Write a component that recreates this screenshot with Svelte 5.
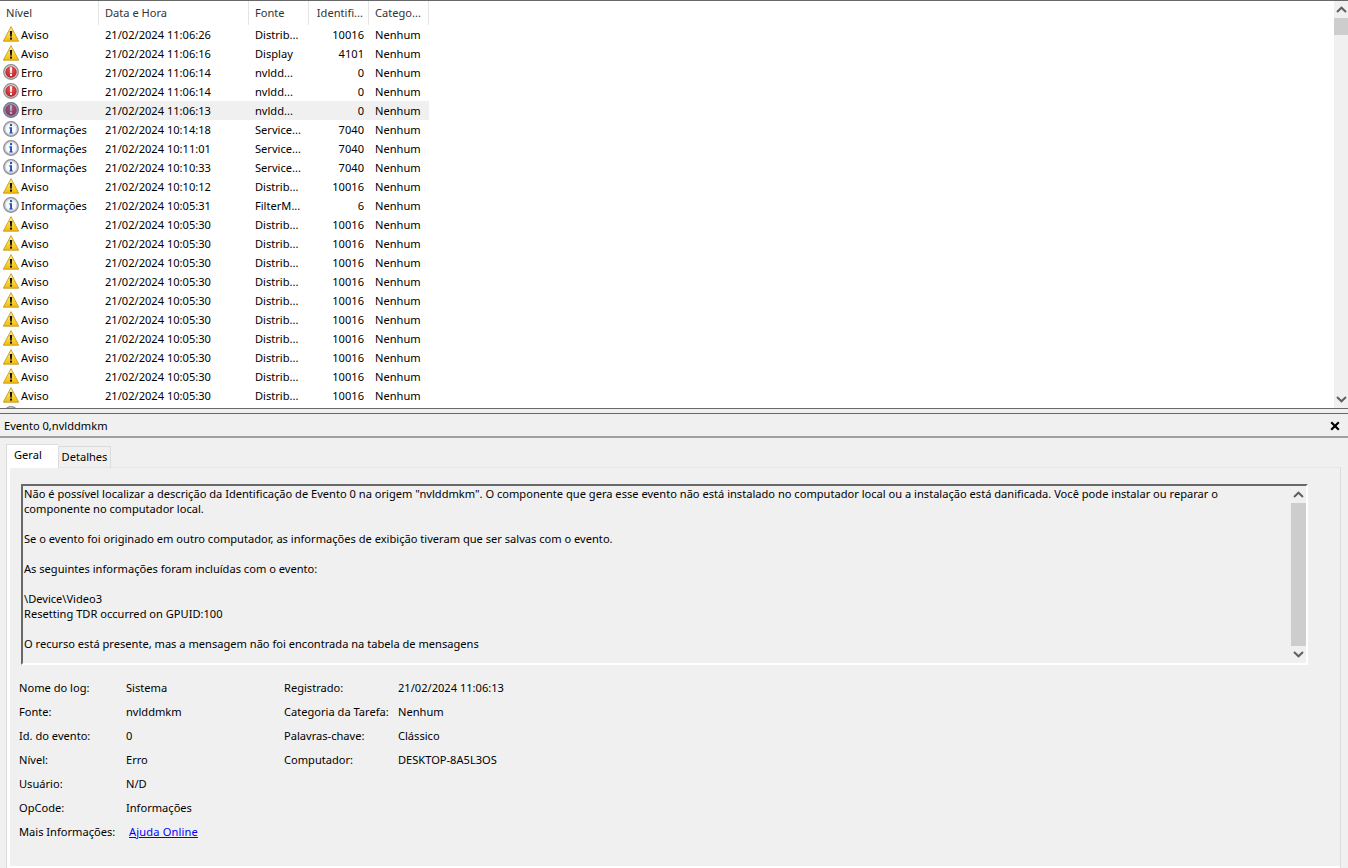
<script>
  const times = ['11:06:26','11:06:16','11:06:14','11:06:14','11:06:13','10:14:18','10:11:01','10:10:33','10:10:12','10:05:31'];
  const labels = { warn: 'Aviso', err: 'Erro', info: 'Informações' };
  const head = [
    { kind: 'warn', src: 'Distrib...', id: 10016 },
    { kind: 'warn', src: 'Display', id: 4101 },
    { kind: 'err', src: 'nvldd...', id: 0 },
    { kind: 'err', src: 'nvldd...', id: 0 },
    { kind: 'err', src: 'nvldd...', id: 0, selected: true },
    { kind: 'info', src: 'Service...', id: 7040 },
    { kind: 'info', src: 'Service...', id: 7040 },
    { kind: 'info', src: 'Service...', id: 7040 },
    { kind: 'warn', src: 'Distrib...', id: 10016 },
    { kind: 'info', src: 'FilterM...', id: 6 }
  ].map((r, i) => ({ ...r, time: times[i] }));
  const tail = Array.from({ length: 10 }, () => ({ kind: 'warn', src: 'Distrib...', id: 10016, time: '10:05:30' }));

  const fieldsLeft = [
    ['Nome do log:', 'Sistema'],
    ['Fonte:', 'nvlddmkm'],
    ['Id. do evento:', '0'],
    ['Nível:', 'Erro'],
    ['Usuário:', 'N/D'],
    ['OpCode:', 'Informações']
  ];
  const fieldsRight = [
    ['Registrado:', '21/02/2024 11:06:13'],
    ['Categoria da Tarefa:', 'Nenhum'],
    ['Palavras-chave:', 'Clássico'],
    ['Computador:', 'DESKTOP-8A5L3OS']
  ];
  const rows = [...head, ...tail];
</script>

{#snippet icon(kind, dim)}
  <svg class="ico" width="16" height="16" viewBox="0 0 16 16">
    {#if kind === 'warn'}
      <path d="M8 .6 L15.7 15.2 H.3 Z" fill="url(#gw)" stroke="#c2920f" stroke-width=".8" stroke-linejoin="round" />
      <path d="M6.8 5 H9.2 L8.7 10.8 H7.3 Z" fill="#111" />
      <rect x="7" y="11.6" width="2" height="2" fill="#111" />
    {:else if kind === 'err'}
      <circle cx="8" cy="8" r="7.3" fill="url(#gr)" stroke="#8b8b8b" stroke-width="1.2" />
      <circle cx="8" cy="8" r="5.7" fill="url(#ge)" />
      <path d="M6.8 3.2 H9.2 L8.7 9.2 H7.3 Z" fill="#fff" />
      <rect x="7" y="10" width="2" height="2" fill="#fff" />
      {#if dim}
        <circle cx="8" cy="8" r="7.9" fill="#3d5a9c" fill-opacity=".42" />
      {/if}
    {:else}
      <circle cx="8" cy="8" r="7.3" fill="url(#gr)" stroke="#8b8b8b" stroke-width="1.2" />
      <circle cx="8" cy="8" r="5.7" fill="#f7f9fd" stroke="#b9c4dc" stroke-width=".5" />
      <rect x="7" y="3.1" width="2.1" height="2" fill="#2450b0" />
      <path d="M6.3 6.2 H9 V11.4 H9.9 V12.6 H6.2 V11.4 H7.1 V7.4 H6.3 Z" fill="#2450b0" />
    {/if}
  </svg>
{/snippet}

{#snippet chevron(up)}
  <svg width="11" height="7" viewBox="0 0 11 7" class="chev">
    <path d={up ? 'M1 6 L5.5 1.7 L10 6' : 'M1 1 L5.5 5.3 L10 1'} fill="none" stroke="#606060" stroke-width="2" />
  </svg>
{/snippet}

<svg width="0" height="0" class="defs">
  <defs>
    <linearGradient id="gw" x1="0" y1="0" x2="0" y2="1">
      <stop offset="0" stop-color="#fff3a8" />
      <stop offset=".55" stop-color="#fbd63a" />
      <stop offset="1" stop-color="#f2b90f" />
    </linearGradient>
    <linearGradient id="gr" x1="0" y1="0" x2="0" y2="1">
      <stop offset="0" stop-color="#e4e4e4" />
      <stop offset="1" stop-color="#bcbcbc" />
    </linearGradient>
    <radialGradient id="ge" cx=".5" cy=".35" r=".75">
      <stop offset="0" stop-color="#ee5a5a" />
      <stop offset="1" stop-color="#b4141a" />
    </radialGradient>
  </defs>
</svg>

<div class="viewer">
  <section class="top">
    <div class="table">
      <div class="thead">
        <div class="th level">Nível</div>
        <div class="th date">Data e Hora</div>
        <div class="th source">Fonte</div>
        <div class="th ident">Identifi...</div>
        <div class="th cat">Catego...</div>
      </div>
      {#each rows as r}
        <div class="row">
          <div class="cell level">
            {@render icon(r.kind, r.selected)}
            <span class="lvl" class:sel={r.selected}>{labels[r.kind]}</span>
          </div>
          <div class="rest" class:sel={r.selected}>
            <div class="cell date">21/02/2024 {r.time}</div>
            <div class="cell source">{r.src}</div>
            <div class="cell ident">{r.id}</div>
            <div class="cell cat">Nenhum</div>
          </div>
        </div>
      {/each}
      <!-- next row, only the top of its icon shows above the pane edge -->
      <div class="peek">{@render icon('info', false)}</div>
    </div>
    <div class="vscroll">
      <div class="btn">{@render chevron(true)}</div>
      <div class="thumb small"></div>
      <div class="track"></div>
      <div class="btn">{@render chevron(false)}</div>
    </div>
  </section>

  <div class="splitter"></div>

  <section class="bottom">
    <header class="title">
      <span>Evento 0,nvlddmkm</span>
      <svg width="10" height="10" viewBox="0 0 10 10" class="close">
        <path d="M1.2 1.2 L8.8 8.8 M8.8 1.2 L1.2 8.8" stroke="#000" stroke-width="2.2" />
      </svg>
    </header>

    <div class="tabs">
      <div class="tab active">Geral</div>
      <div class="tab">Detalhes</div>
    </div>

    <div class="panel">
      <div class="pane">
        <div class="descbox">
          <div class="desc">
            <p>Não é possível localizar a descrição da Identificação de Evento 0 na origem "nvlddmkm". O componente que gera esse evento não está instalado no computador local ou a instalação está danificada. Você pode instalar ou reparar o componente no computador local.</p>
            <p>Se o evento foi originado em outro computador, as informações de exibição tiveram que ser salvas com o evento.</p>
            <p>As seguintes informações foram incluídas com o evento:</p>
            <p>\Device\Video3<br />Resetting TDR occurred on GPUID:100</p>
            <p>O recurso está presente, mas a mensagem não foi encontrada na tabela de mensagens</p>
          </div>
          <div class="vscroll inner">
            <div class="btn">{@render chevron(true)}</div>
            <div class="thumb"></div>
            <div class="btn">{@render chevron(false)}</div>
          </div>
        </div>

        <div class="fields">
          <div class="col">
            {#each fieldsLeft as [k, v]}
              <div class="field"><span class="key">{k}</span><span>{v}</span></div>
            {/each}
            <div class="field"><span class="key">Mais Informações:</span><span class="link">Ajuda Online</span></div>
          </div>
          <div class="col right">
            {#each fieldsRight as [k, v]}
              <div class="field"><span class="key">{k}</span><span>{v}</span></div>
            {/each}
          </div>
        </div>
      </div>
    </div>
  </section>
</div>

<style>
  :global(body) {
    margin: 0;
    background: #f0f0f0;
    font-family: "Noto Sans", "Open Sans", sans-serif;
    font-size: 11.1px;
    color: #000;
  }
  .defs { position: absolute; }
  .viewer { width: 1348px; height: 868px; overflow: hidden; display: flex; flex-direction: column; }

  .top {
    height: 407px;
    flex: none;
    border-top: 1px solid #696969;
    border-bottom: 1px solid #696969;
    background: #fff;
    display: flex;
    justify-content: space-between;
  }
  .table { width: 429px; height: 407px; overflow: hidden; }
  .thead { display: flex; height: 24px; }
  .th {
    box-sizing: border-box;
    line-height: 23px;
    padding-left: 6px;
    border-right: 1px solid #e5e5e5;
    color: #333;
    white-space: nowrap;
  }
  .level { width: 99px; }
  .date { width: 150px; }
  .source { width: 60px; }
  .ident { width: 60px; }
  .cat { width: 60px; }
  .th.ident { text-align: right; padding: 0 5px 0 0; }

  .row { display: flex; height: 19px; line-height: 19px; white-space: nowrap; }
  .cell { box-sizing: border-box; padding-left: 6px; overflow: hidden; }
  .cell.level { display: flex; align-items: flex-start; padding: 1px 0 0 3px; }
  .cell.ident { text-align: right; padding: 0 5px 0 0; }
  .rest { display: flex; }
  .ico { flex: none; }
  .lvl { margin: -1px 0 0 2px; padding-right: 100px; height: 19px; }
  .sel { background: #f0f0f0; }
  .peek { padding: 1px 0 0 3px; }

  .vscroll { width: 14px; background: #f0f0f0; display: flex; flex-direction: column; flex: none; }
  .btn { height: 17px; display: flex; align-items: center; justify-content: center; flex: none; }
  .thumb { flex: 1; background: #cdcdcd; }
  .thumb.small { flex: none; height: 17px; }
  .track { flex: 1; }
  .chev { display: block; }

  .splitter { height: 4px; background: #f0f0f0; border-bottom: 1px solid #696969; flex: none; }

  .bottom { flex: 1; display: flex; flex-direction: column; min-height: 0; }
  .title {
    box-sizing: border-box;
    height: 24px;
    flex: none;
    padding: 1px 8px 0 4px;
    display: flex;
    align-items: center;
    justify-content: space-between;
    border-bottom: 2px solid #a0a0a0;
  }
  .tabs { display: flex; padding: 6px 0 0 6px; height: 24px; align-items: flex-end; flex: none; position: relative; z-index: 1; margin-bottom: -1px; }
  .tab {
    box-sizing: border-box;
    height: 22px;
    width: 53px;
    line-height: 19px;
    text-align: center;
    background: #f0f0f0;
    border: 1px solid #dcdcdc;
    border-bottom: 1px solid #e6e6e6;
  }
  .tab.active {
    width: 52px;
    height: 24px;
    background: #fff;
    line-height: 20px;
    text-align: left;
    padding-left: 7px;
    border-bottom: none;
    border-right: 0;
  }
  .panel {
    margin-left: 6px;
    width: 1335px;
    flex: 1;
    min-height: 0;
    box-sizing: border-box;
    background: #fff;
    border: 1px solid #dcdcdc;
    border-bottom: none;
    border-top-color: #e6e6e6;
    padding: 0 0 2px 3px;
    display: flex;
  }
  .pane {
    flex: 1;
    background: #f0f0f0;
    padding: 16px 0 0 11px;
  }
  .descbox {
    width: 1287px;
    height: 181px;
    box-sizing: border-box;
    border-style: solid;
    border-width: 2px;
    border-color: #696969 #fff #fff #696969;
    display: flex;
    justify-content: space-between;
    line-height: 15px;
  }
  .desc { padding-left: 1px; width: 1240px; }
  .desc p { margin: 0 0 15px; }
  .vscroll.inner { width: 15px; }

  .fields { display: flex; margin: 13px 0 0 -2px; }
  .col { width: 265px; }
  .field { display: flex; height: 24px; line-height: 20px; white-space: nowrap; }
  .key { width: 107px; flex: none; }
  .right .key { width: 114px; }
  .link { color: #0000ff; text-decoration: underline; margin-left: 3px; letter-spacing: .15px; }
</style>
